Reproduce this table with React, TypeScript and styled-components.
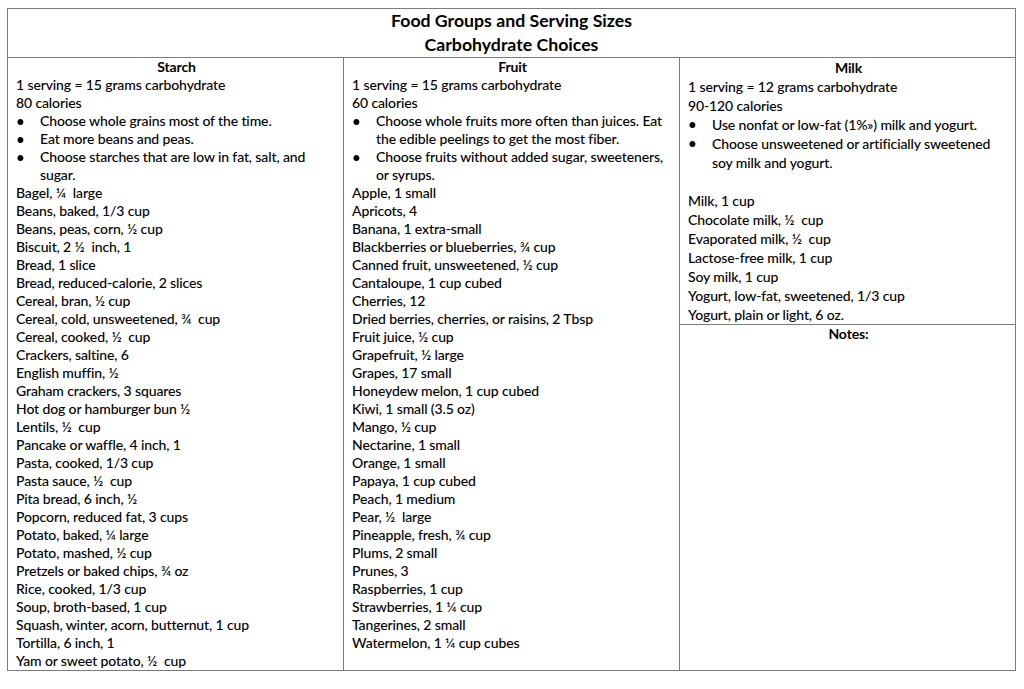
import styled, { createGlobalStyle } from "styled-components";

const GlobalStyle = createGlobalStyle`
  body {
    margin: 0;
    background: #ffffff;
  }
`;

const rule = "#7c7c7c";

const Table = styled.div`
  box-sizing: border-box;
  margin: 8px 0 0 7px;
  width: 1009px;
  border: 1px solid ${rule};
  display: grid;
  grid-template-columns: 335px 336px 336px;
  font-family: Lato, "Open Sans", sans-serif;
  font-size: 14px;
  font-weight: 500;
  letter-spacing: -0.12px;
  color: #000;
`;

const Title = styled.div`
  grid-column: 1 / -1;
  border-bottom: 1px solid ${rule};
  text-align: center;
  font-weight: 700;
  font-size: 17.7px;
  letter-spacing: 0;
  line-height: 24px;
`;

const Column = styled.div<{ $divided?: boolean }>`
  display: flex;
  flex-direction: column;
  border-left: ${(p) => (p.$divided ? `1px solid ${rule}` : "none")};
`;

const Cell = styled.div<{ $lh?: number; $grow?: boolean; $ruled?: boolean }>`
  padding: 0 6px 0 8px;
  line-height: ${(p) => p.$lh ?? 18}px;
  flex: ${(p) => (p.$grow ? 1 : "none")};
  border-bottom: ${(p) => (p.$ruled ? `1px solid ${rule}` : "none")};
`;

const Heading = styled.div`
  text-align: center;
  font-weight: 700;
`;

const Line = styled.div`
  white-space: pre;
`;

const Blank = styled.div`
  height: 1lh;
`;

const Bullet = styled.div`
  display: grid;
  grid-template-columns: 24px 1fr;
  white-space: pre;
  &::before {
    content: "•";
    font-size: 15px;
  }
`;

const starch = [
  "Bagel, ¼  large",
  "Beans, baked, 1/3 cup",
  "Beans, peas, corn, ½ cup",
  "Biscuit, 2 ½  inch, 1",
  "Bread, 1 slice",
  "Bread, reduced-calorie, 2 slices",
  "Cereal, bran, ½ cup",
  "Cereal, cold, unsweetened, ¾  cup",
  "Cereal, cooked, ½  cup",
  "Crackers, saltine, 6",
  "English muffin, ½",
  "Graham crackers, 3 squares",
  "Hot dog or hamburger bun ½",
  "Lentils, ½  cup",
  "Pancake or waffle, 4 inch, 1",
  "Pasta, cooked, 1/3 cup",
  "Pasta sauce, ½  cup",
  "Pita bread, 6 inch, ½",
  "Popcorn, reduced fat, 3 cups",
  "Potato, baked, ¼ large",
  "Potato, mashed, ½ cup",
  "Pretzels or baked chips, ¾ oz",
  "Rice, cooked, 1/3 cup",
  "Soup, broth-based, 1 cup",
  "Squash, winter, acorn, butternut, 1 cup",
  "Tortilla, 6 inch, 1",
  "Yam or sweet potato, ½  cup",
];

const fruit = [
  "Apple, 1 small",
  "Apricots, 4",
  "Banana, 1 extra-small",
  "Blackberries or blueberries, ¾ cup",
  "Canned fruit, unsweetened, ½ cup",
  "Cantaloupe, 1 cup cubed",
  "Cherries, 12",
  "Dried berries, cherries, or raisins, 2 Tbsp",
  "Fruit juice, ½ cup",
  "Grapefruit, ½ large",
  "Grapes, 17 small",
  "Honeydew melon, 1 cup cubed",
  "Kiwi, 1 small (3.5 oz)",
  "Mango, ½ cup",
  "Nectarine, 1 small",
  "Orange, 1 small",
  "Papaya, 1 cup cubed",
  "Peach, 1 medium",
  "Pear, ½  large",
  "Pineapple, fresh, ¾ cup",
  "Plums, 2 small",
  "Prunes, 3",
  "Raspberries, 1 cup",
  "Strawberries, 1 ¼ cup",
  "Tangerines, 2 small",
  "Watermelon, 1 ¼ cup cubes",
];

const milk = [
  "Milk, 1 cup",
  "Chocolate milk, ½  cup",
  "Evaporated milk, ½  cup",
  "Lactose-free milk, 1 cup",
  "Soy milk, 1 cup",
  "Yogurt, low-fat, sweetened, 1/3 cup",
  "Yogurt, plain or light, 6 oz.",
];

const App = function () {
  return (
    <>
      <GlobalStyle />
      <Table>
        <Title>
          Food Groups and Serving Sizes
          <br />
          Carbohydrate Choices
        </Title>

        <Column>
          <Cell>
            <Heading>Starch</Heading>
            <Line>1 serving = 15 grams carbohydrate</Line>
            <Line>80 calories</Line>
            <Bullet>Choose whole grains most of the time.</Bullet>
            <Bullet>Eat more beans and peas.</Bullet>
            <Bullet>{"Choose starches that are low in fat, salt, and\nsugar."}</Bullet>
            {starch.map((item) => (
              <Line key={item}>{item}</Line>
            ))}
          </Cell>
        </Column>

        <Column $divided>
          <Cell>
            <Heading>Fruit</Heading>
            <Line>1 serving = 15 grams carbohydrate</Line>
            <Line>60 calories</Line>
            <Bullet>{"Choose whole fruits more often than juices. Eat\nthe edible peelings to get the most fiber."}</Bullet>
            <Bullet>{"Choose fruits without added sugar, sweeteners,\nor syrups."}</Bullet>
            {fruit.map((item) => (
              <Line key={item}>{item}</Line>
            ))}
          </Cell>
        </Column>

        <Column $divided>
          <Cell $lh={19} $ruled>
            <Heading>Milk</Heading>
            <Line>1 serving = 12 grams carbohydrate</Line>
            <Line>90-120 calories</Line>
            <Bullet>Use nonfat or low-fat (1%») milk and yogurt.</Bullet>
            <Bullet>{"Choose unsweetened or artificially sweetened\nsoy milk and yogurt."}</Bullet>
            <Blank />
            {milk.map((item) => (
              <Line key={item}>{item}</Line>
            ))}
          </Cell>
          <Cell $grow>
            <Heading>Notes:</Heading>
          </Cell>
        </Column>
      </Table>
    </>
  );
};

export default App;
